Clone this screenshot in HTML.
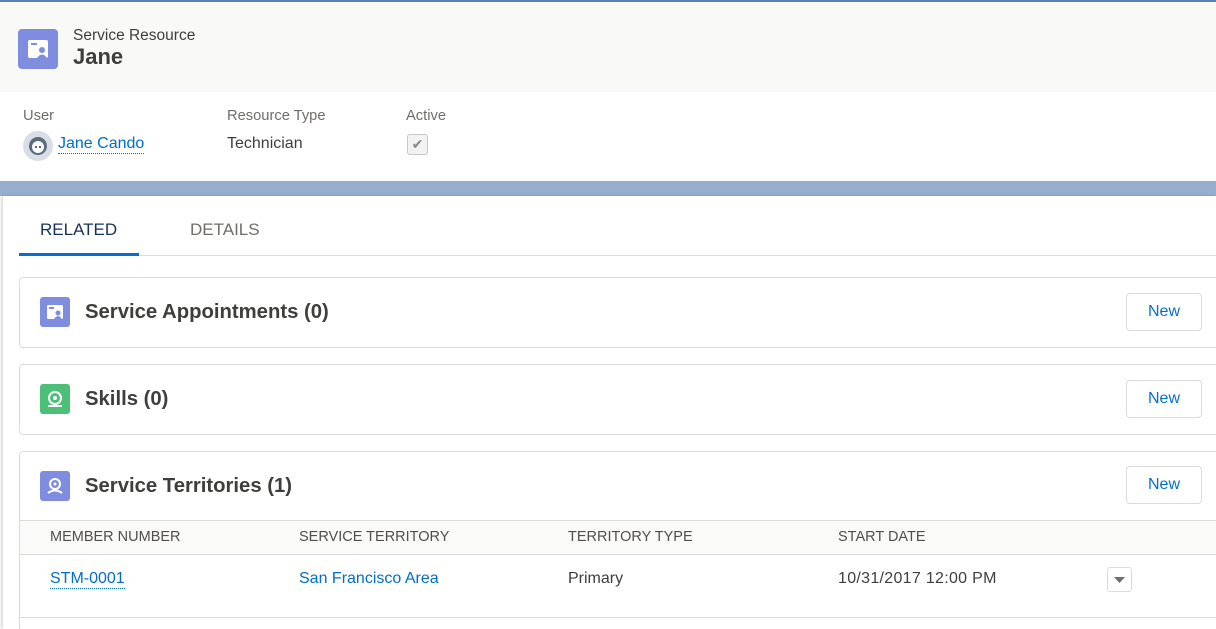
<!DOCTYPE html>
<html style="overflow:hidden;width:1216px;height:629px"><head><style>
*{box-sizing:border-box;margin:0;padding:0}
body{width:1216px;height:629px;overflow:hidden;font-family:"Liberation Sans",sans-serif;background:#fff;color:#3e3e3c;position:relative}
.abs{position:absolute}
.hdr{left:0;top:0;width:1216px;height:92px;background:#f9f9f7;border-top:2px solid #5a7fb0}
.det{left:0;top:92px;width:1216px;height:89px;background:#fff}
.band{left:0;top:181px;width:1216px;height:15px;background:#95aed0}
.main{left:3px;top:196px;width:1213px;height:433px;background:#fff;box-shadow:-2px 0 3px rgba(0,0,0,.15)}
.lbl{font-size:14.7px;color:#706e6b}
.val{font-size:16px;color:#3e3e3c}
.link{color:#006dcc}
.card{left:19px;width:1220px;border:1px solid #dddbda;border-radius:4px;background:#fff}
.ic{width:30px;height:30px;border-radius:3px}
.ttl{font-size:20.3px;font-weight:bold;color:#3e3e3c}
.btn{width:76px;height:38px;border:1px solid #dddbda;border-radius:4px;color:#0070d2;font-size:16px;text-align:center;line-height:36px;background:#fff}
.th{font-size:14.5px;color:#514f4d}
</style></head><body>
<div class="abs hdr"></div>
<div class="abs" style="left:18px;top:29px;width:40px;height:40px;background:#7f8de1;border-radius:4px">
<svg width="40" height="40" viewBox="0 0 40 40"><rect x="10" y="11" width="20" height="18" rx="2" fill="#fff"/><rect x="13" y="14" width="6" height="2" fill="#7f8de1"/><circle cx="24" cy="21" r="3" fill="#7f8de1"/><path d="M19 29 q5-7 10 0z" fill="#7f8de1"/></svg></div>
<div class="abs" style="left:73px;top:27px;font-size:15.5px;color:#3e3e3c">Service Resource</div>
<div class="abs" style="left:73px;top:44px;font-size:22px;font-weight:bold;color:#3e3e3c">Jane</div>
<div class="abs det"></div>
<div class="abs lbl" style="left:23px;top:108px">User</div>
<div class="abs lbl" style="left:227px;top:108px">Resource Type</div>
<div class="abs lbl" style="left:406px;top:108px">Active</div>
<div class="abs" style="left:23px;top:131px;width:30px;height:30px;border-radius:50%;background:#d8dde6">
<svg width="30" height="30"><circle cx="15" cy="15" r="9" fill="#5c6b80"/><circle cx="15" cy="16" r="6" fill="#fff"/><circle cx="13" cy="16" r="1" fill="#333"/><circle cx="17" cy="16" r="1" fill="#333"/></svg></div>
<div class="abs val link" style="left:58px;top:135px;border-bottom:1px dotted #006dcc;line-height:18px">Jane Cando</div>
<div class="abs val" style="left:227px;top:135px">Technician</div>
<div class="abs" style="left:407px;top:134px;width:21px;height:21px;border:1px solid #c9c7c5;border-radius:3px;background:#f3f2f2;color:#8a8886;font-size:14px;text-align:center;line-height:19px">✔</div>
<div class="abs band"></div>
<div class="abs main"></div>
<div class="abs" style="left:40px;top:220px;font-size:17px;color:#16325c">RELATED</div>
<div class="abs" style="left:190px;top:220px;font-size:17px;color:#706e6b">DETAILS</div>
<div class="abs" style="left:19px;top:255px;width:1197px;height:1px;background:#dddbda"></div>
<div class="abs" style="left:19px;top:253px;width:120px;height:3px;background:#0070d2"></div>

<div class="abs card" style="top:277px;height:71px"></div>
<div class="abs ic" style="left:40px;top:297px;background:#7f8de1"><svg width="30" height="30"><rect x="7" y="8" width="16" height="14" rx="1.5" fill="#fff"/><rect x="9" y="10" width="5" height="2" fill="#7f8de1"/><circle cx="18" cy="16" r="2.5" fill="#7f8de1"/><path d="M14 22 q4-6 8 0z" fill="#7f8de1"/></svg></div>
<div class="abs ttl" style="left:85px;top:301px">Service Appointments (0)</div>
<div class="abs btn" style="left:1126px;top:293px">New</div>

<div class="abs card" style="top:364px;height:71px"></div>
<div class="abs ic" style="left:40px;top:384px;background:#4bc076"><svg width="30" height="30"><circle cx="15" cy="14" r="6" fill="none" stroke="#fff" stroke-width="2"/><circle cx="15" cy="14" r="2" fill="#fff"/><path d="M8 22 h14" stroke="#fff" stroke-width="2"/></svg></div>
<div class="abs ttl" style="left:85px;top:388px">Skills (0)</div>
<div class="abs btn" style="left:1126px;top:380px">New</div>

<div class="abs card" style="top:451px;height:178px;border-bottom:none;border-radius:4px 4px 0 0"></div>
<div class="abs ic" style="left:40px;top:471px;background:#7f8de1"><svg width="30" height="30"><circle cx="15" cy="13" r="5" fill="none" stroke="#fff" stroke-width="2"/><circle cx="15" cy="13" r="1.5" fill="#fff"/><path d="M8 22 q7-5 14 0" stroke="#fff" stroke-width="2" fill="none"/></svg></div>
<div class="abs ttl" style="left:85px;top:475px">Service Territories (1)</div>
<div class="abs btn" style="left:1126px;top:466px">New</div>
<div class="abs" style="left:20px;top:520px;width:1196px;height:35px;background:#fafaf9;border-top:1px solid #dddbda;border-bottom:1px solid #dddbda"></div>
<div class="abs th" style="left:50px;top:529px">MEMBER NUMBER</div>
<div class="abs th" style="left:299px;top:529px">SERVICE TERRITORY</div>
<div class="abs th" style="left:568px;top:529px">TERRITORY TYPE</div>
<div class="abs th" style="left:838px;top:529px">START DATE</div>
<div class="abs val link" style="left:50px;top:570px;border-bottom:1px dotted #006dcc;line-height:18px">STM-0001</div>
<div class="abs val link" style="left:299px;top:570px">San Francisco Area</div>
<div class="abs val" style="left:568px;top:570px">Primary</div>
<div class="abs val" style="left:838px;top:570px;letter-spacing:.3px">10/31/2017 12:00 PM</div>
<div class="abs" style="left:1107px;top:567px;width:25px;height:25px;border:1px solid #dddbda;border-radius:3px;background:#fff"><svg width="23" height="23"><path d="M6 9 h11 l-5.5 6z" fill="#706e6b"/></svg></div>
<div class="abs" style="left:20px;top:617px;width:1196px;height:1px;background:#dddbda"></div>
</body></html>
